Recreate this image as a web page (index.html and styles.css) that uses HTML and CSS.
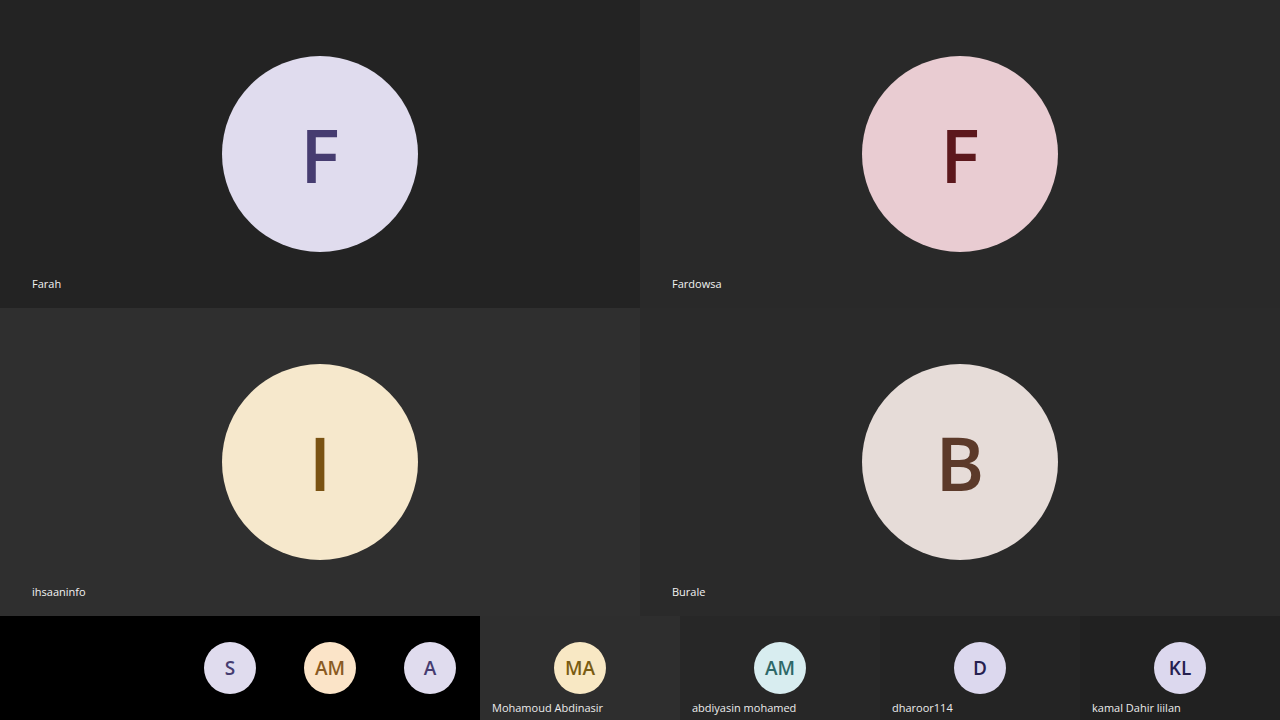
FILE: index.html
```html
<!DOCTYPE html>
<html lang="en">
<head>
    <meta charset="UTF-8">
    <meta name="viewport" content="width=device-width, initial-scale=1.0">
    <title>Meeting</title>
    <link rel="stylesheet" href="styles.css">
</head>
<body>
    <div class="stage">
        <div class="tile t1">
            <div class="avatar big lilac">F</div>
            <span class="name">Farah</span>
        </div>
        <div class="tile t2">
            <div class="avatar big pink">F</div>
            <span class="name">Fardowsa</span>
        </div>
        <div class="tile t3">
            <div class="avatar big cream">I</div>
            <span class="name">ihsaaninfo</span>
        </div>
        <div class="tile t4">
            <div class="avatar big stone">B</div>
            <span class="name">Burale</span>
        </div>
    </div>
    <div class="strip">
        <div class="overflow">
            <div class="avatar small lilac">S</div>
            <div class="avatar small peach">AM</div>
            <div class="avatar small lilac">A</div>
        </div>
        <div class="mini m1">
            <div class="avatar small gold">MA</div>
            <span class="mname">Mohamoud Abdinasir</span>
        </div>
        <div class="mini m2">
            <div class="avatar small teal">AM</div>
            <span class="mname">abdiyasin mohamed</span>
        </div>
        <div class="mini m3">
            <div class="avatar small navy">D</div>
            <span class="mname">dharoor114</span>
        </div>
        <div class="mini m4">
            <div class="avatar small navy">KL</div>
            <span class="mname">kamal Dahir liilan</span>
        </div>
    </div>
</body>
</html>
```

FILE: styles.css
```css
body{
    margin: 0;
    width: 1280px;
    height: 720px;
    overflow: hidden;
    background: #000;
    font-family: "Open Sans", "Noto Sans", sans-serif;
}

.stage{
    display: grid;
    grid-template-columns: 640px 640px;
    grid-template-rows: 308px 308px;
}

.tile{
    display: flex;
    flex-direction: column;
    align-items: center;
    justify-content: center;
    position: relative;
}
.t1{ background: #232323; }
.t2{ background: #292929; }
.t3{ background: #2f2f2f; }
.t4{ background: #2a2a2a; }

.name{
    position: absolute;
    left: 32px;
    top: 276px;
    color: #f2f2f2;
    font-size: 11px;
    line-height: 16px;
}

.avatar{
    border-radius: 50%;
    display: flex;
    align-items: center;
    justify-content: center;
    flex: none;
}
.avatar.big{
    width: 196px;
    height: 196px;
    font-size: 74px;
    font-weight: 600;
}
.avatar.small{
    width: 52px;
    height: 52px;
    font-size: 19px;
    font-weight: 600;
}

/* 색상 */
.lilac{ background: #e0dcee; color: #463c70; }
.pink{ background: #e9ccd2; color: #5c171c; }
.cream{ background: #f6e8cc; color: #7a5212; }
.stone{ background: #e6dcd8; color: #5c3a2a; }
.peach{ background: #fbe4c8; color: #8a5a22; }
.gold{ background: #f8e8c4; color: #7a5c12; }
.teal{ background: #d8edf0; color: #2e6868; }
.navy{ background: #dcd8ee; color: #262050; }

.strip{
    display: flex;
    height: 104px;
}
.overflow{
    width: 480px;
    background: #000;
    display: flex;
    align-items: center;
    justify-content: flex-end;
    gap: 48px;
    padding-right: 24px;
    box-sizing: border-box;
}

.mini{
    width: 200px;
    position: relative;
    display: flex;
    justify-content: center;
    align-items: center;
}
.m1{ background: #2e2e2e; }
.m2{ background: #272727; }
.m3{ background: #242424; }
.m4{ background: #212121; }

.mname{
    position: absolute;
    left: 12px;
    top: 84px;
    color: #ececec;
    font-size: 11px;
    line-height: 16px;
    white-space: nowrap;
}
```
